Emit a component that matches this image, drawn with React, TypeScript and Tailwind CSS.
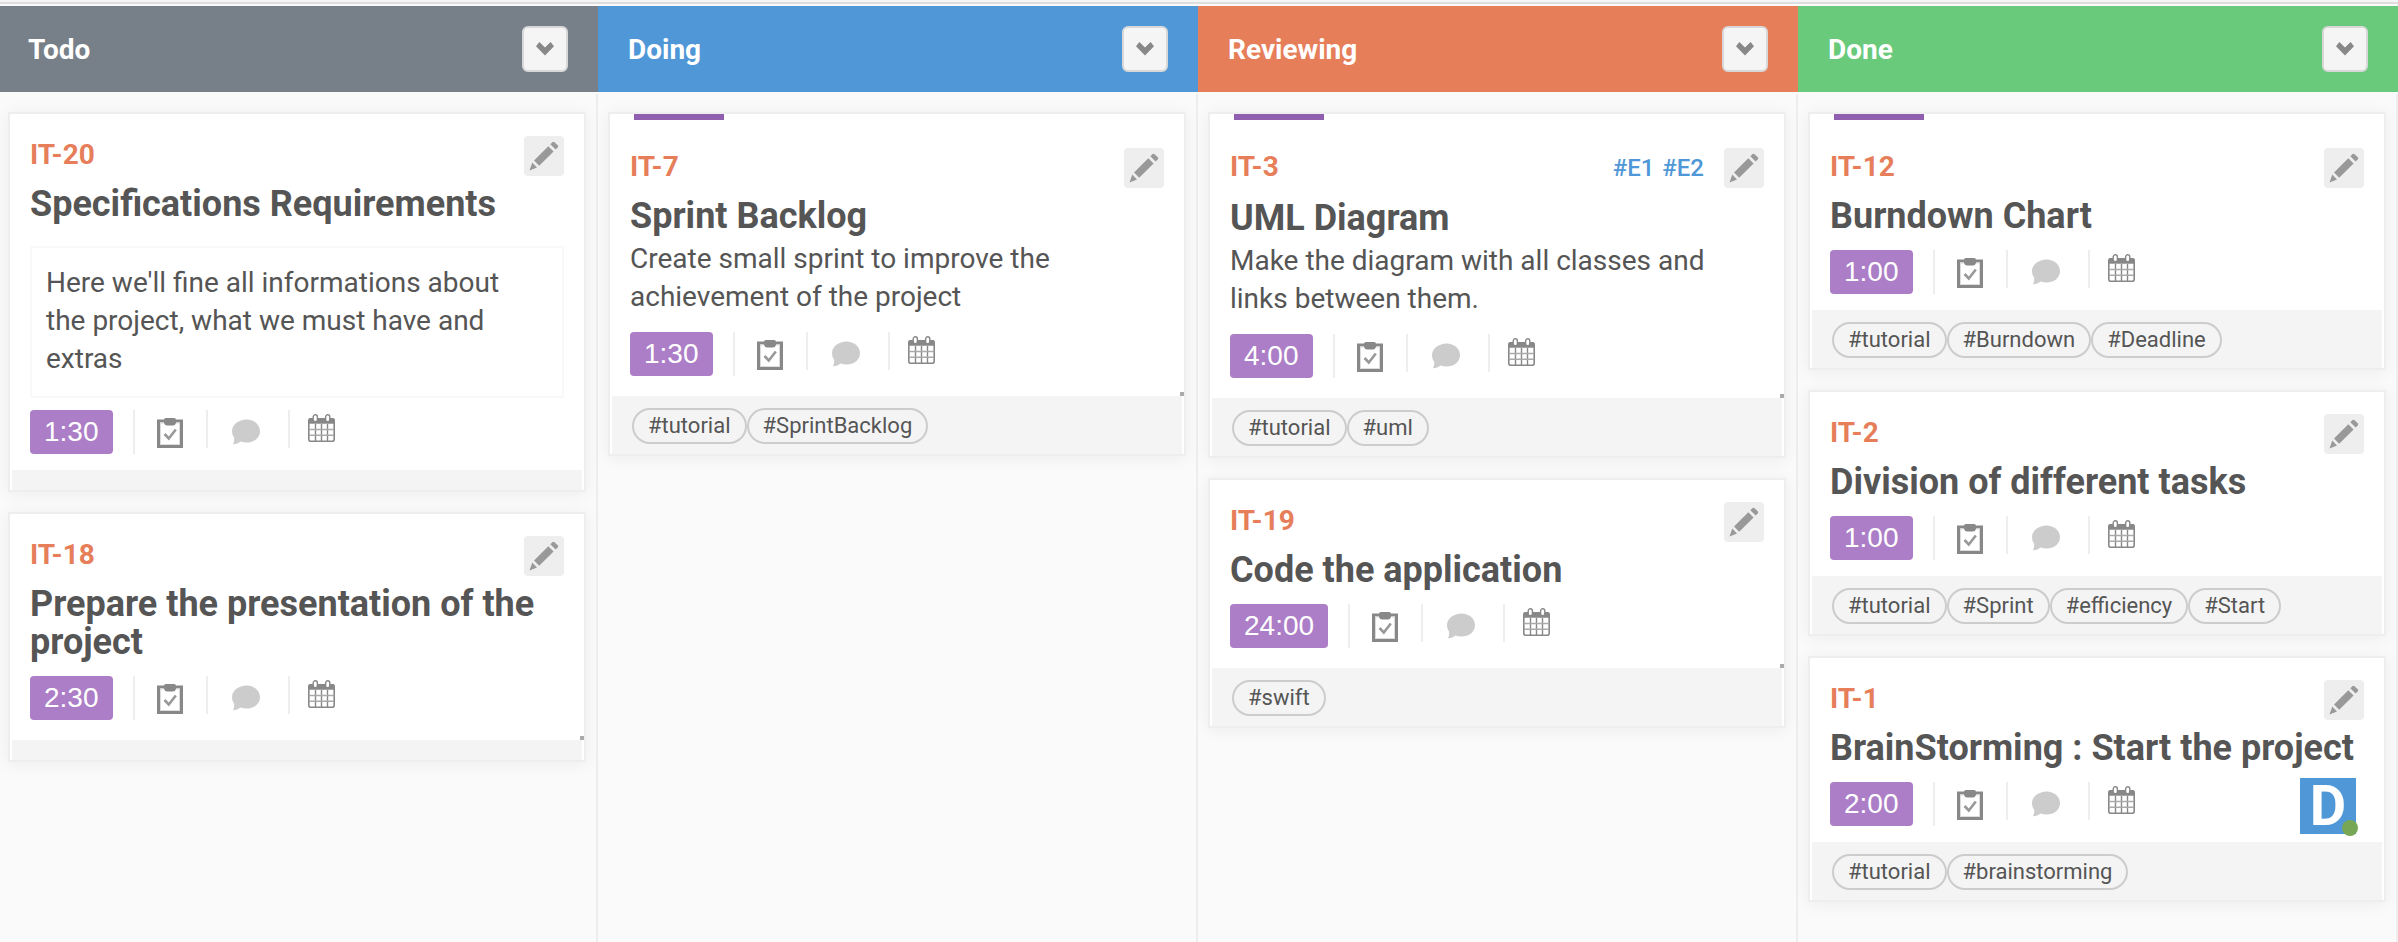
import React from "react";

type Task = {
  id: string;
  title: string;
  time: string;
  text?: string;
  boxed?: boolean;
  accent?: boolean;
  handle?: boolean;
  epics?: string[];
  tags?: string[];
  member?: string;
};

type Column = { name: string; color: string; tasks: Task[] };

const columns: Column[] = [
  {
    name: "Todo",
    color: "bg-[#777f88]",
    tasks: [
      {
        id: "IT-20",
        title: "Specifications Requirements",
        text: "Here we'll fine all informations about the project, what we must have and extras",
        boxed: true,
        time: "1:30",
      },
      { id: "IT-18", title: "Prepare the presentation of the project", time: "2:30", handle: true },
    ],
  },
  {
    name: "Doing",
    color: "bg-[#4f97d7]",
    tasks: [
      {
        id: "IT-7",
        title: "Sprint Backlog",
        text: "Create small sprint to improve the achievement of the project",
        time: "1:30",
        accent: true,
        handle: true,
        tags: ["#tutorial", "#SprintBacklog"],
      },
    ],
  },
  {
    name: "Reviewing",
    color: "bg-[#e67e5a]",
    tasks: [
      {
        id: "IT-3",
        title: "UML Diagram",
        text: "Make the diagram with all classes and links between them.",
        time: "4:00",
        accent: true,
        handle: true,
        epics: ["#E1", "#E2"],
        tags: ["#tutorial", "#uml"],
      },
      { id: "IT-19", title: "Code the application", time: "24:00", handle: true, tags: ["#swift"] },
    ],
  },
  {
    name: "Done",
    color: "bg-[#69ca7c]",
    tasks: [
      { id: "IT-12", title: "Burndown Chart", time: "1:00", accent: true, tags: ["#tutorial", "#Burndown", "#Deadline"] },
      { id: "IT-2", title: "Division of different tasks", time: "1:00", tags: ["#tutorial", "#Sprint", "#efficiency", "#Start"] },
      { id: "IT-1", title: "BrainStorming : Start the project", time: "2:00", member: "D", tags: ["#tutorial", "#brainstorming"] },
    ],
  },
];

function ChevronIcon() {
  return (
    <svg width="18" height="14" viewBox="0 0 18 14" aria-hidden="true">
      <path d="M3.4 0 9 5.6 14.6 0 18 4.2 9 13.4 0 4.2Z" fill="#888" />
    </svg>
  );
}

function PencilIcon() {
  return (
    <svg width="40" height="40" viewBox="0 0 40 40" aria-hidden="true" fill="#999">
      <path d="M5.5 34.5 8.3 26.6 13 31.6Z" />
      <path d="M10 24.6 24.3 10.2 29.6 15.4 15.2 29.8Z" />
      <path d="M26.3 8.2 28.3 6.2Q29.4 5.2 30.6 6.2L33.7 9.3Q34.7 10.4 33.7 11.5L31.6 13.5Z" />
    </svg>
  );
}

function ClipboardIcon() {
  return (
    <svg width="26" height="30" viewBox="0 0 26 30" aria-hidden="true">
      <rect x="1.5" y="3" width="23" height="25.5" fill="#fff" stroke="#888" strokeWidth="3" />
      <rect x="3.5" y="5" width="19" height="21.5" fill="none" stroke="#ddd" strokeWidth="1" />
      <path d="M7 2Q7 0 9 0H17Q19 0 19 2V5Q18 7.5 16 7.5H10Q8 7.5 7 5Z" fill="#888" />
      <path d="M7.5 16 11.8 20.5 18.8 11.5" fill="none" stroke="#999" strokeWidth="2.6" />
    </svg>
  );
}

function CommentIcon() {
  return (
    <svg width="28" height="26" viewBox="0 0 28 26" aria-hidden="true">
      <path
        d="M14.500 0.500C22 0.500 28 5.500 28 12.200S22 23.500 14.500 23.500C12.300 23.500 10.300 23.100 8.500 22.400 6.500 24 4 25 1 25.300 1.900 23.500 2.400 21.500 2.200 18.800 0.800 16.900 0 14.600 0 12.200 0 5.500 7 0.500 14.500 0.500Z"
        fill="#ccc"
      />
    </svg>
  );
}

function CalendarIcon() {
  return (
    <svg width="27" height="28" viewBox="0 0 27 28" aria-hidden="true">
      <rect x="0.8" y="4.8" width="25.4" height="22.4" rx="2" fill="#fff" stroke="#888" strokeWidth="1.6" />
      <path d="M0.5 9.8V6Q0.5 4 2.5 4H24.5Q26.5 4 26.5 6V9.8Z" fill="#888" />
      <path d="M7.5 10V27M13.500 10V27M19.500 10V27" stroke="#888" strokeWidth="1.4" />
      <path d="M1 15.5H26M1 21.200H26" stroke="#aaa" strokeWidth="1.6" />
      <rect x="5.2" y="0.8" width="4.2" height="7" rx="2.1" fill="#fff" stroke="#888" strokeWidth="1.4" />
      <rect x="17.6" y="0.8" width="4.2" height="7" rx="2.1" fill="#fff" stroke="#888" strokeWidth="1.4" />
    </svg>
  );
}

function Card({ task }: { task: Task }) {
  return (
    <article className="border-2 border-[#eee] bg-white shadow-[0_2px_16px_rgba(0,0,0,0.06)]">
      <div className={`relative px-5 ${task.handle ? "pb-5" : "pb-4"}`}>
        {task.accent && (
          <div className="h-3 px-1">
            <div className="h-1.5 w-[90px] bg-[#915fb0]" />
          </div>
        )}
        <div className={`flex items-start pt-[22px] ${task.epics ? "h-[73px]" : "h-[71px]"}`}>
          <a href="#" className="text-[28px] leading-[38px] font-bold text-[#e67e5a]">
            {task.id}
          </a>
          {task.epics && (
            <div className="ml-auto flex gap-2 pr-5 text-2xl leading-10 font-medium text-[#4f97d7]">
              {task.epics.map((e) => (
                <a href="#" key={e}>
                  {e}
                </a>
              ))}
            </div>
          )}
          <button type="button" aria-label="Edit" className={`rounded bg-[#eee] ${task.epics ? "" : "ml-auto"}`}>
            <PencilIcon />
          </button>
        </div>
        <h3 className="text-4xl leading-[38px] font-bold">{task.title}</h3>
        {task.text &&
          (task.boxed ? (
            <p className="mt-[23px] mb-3 border-2 border-[#f9f9f9] pt-4 pr-5 pb-[18px] pl-3.5 text-[28px] leading-[38px]">{task.text}</p>
          ) : (
            <p className="mt-[5px] mb-4 text-[28px] leading-[38px]">{task.text}</p>
          ))}
        <div className={`flex h-11 items-start ${task.text ? "" : "mt-[15px]"}`}>
          <span className="mr-5 rounded bg-[#ac7ec7] px-3.5 font-['Liberation_Sans',sans-serif] text-[28px] leading-[44px] text-white">
            {task.time}
          </span>
          <button type="button" aria-label="Checklist" className="h-11 border-l-2 border-[#eee] pt-2 pr-[23px] pb-1.5 pl-[22px]">
            <ClipboardIcon />
          </button>
          <button type="button" aria-label="Comments" className="h-[38px] border-l-2 border-[#eee] pt-1.5 pr-7 pl-6">
            <CommentIcon />
          </button>
          <button type="button" aria-label="Due date" className="h-[38px] border-l-2 border-[#eee] pb-0.5 pl-[18px]">
            <CalendarIcon />
          </button>
          {task.member && (
            <a
              href="#"
              className="relative -mt-1 mr-2 ml-auto flex size-14 items-center justify-center bg-[#4f97d7] text-[56px] leading-[56px] font-bold text-white"
            >
              {task.member}
              <span className="absolute -right-0.5 -bottom-0.5 size-4 rounded-full bg-[#77a754]" />
            </a>
          )}
        </div>
        {task.handle && <span className="absolute right-0 bottom-0 size-1 bg-[#aaa]" />}
      </div>
      <footer className="mx-0.5 flex min-h-5 bg-[#f4f4f4] px-5">
        {task.tags && (
          <ul className="flex flex-wrap pt-3 pb-2.5">
            {task.tags.map((t) => (
              <li key={t} className="rounded-full border-2 border-[#ccc] px-3.5 text-[22px] leading-8">
                {t}
              </li>
            ))}
          </ul>
        )}
      </footer>
    </article>
  );
}

export default function App() {
  return (
    <div className="flex min-h-screen flex-col overflow-hidden bg-[#fafafa] font-['Roboto',sans-serif] text-[#555]">
      <div className="h-1 border-b-2 border-[#ddd] bg-[#f5f5f5]" />
      <main className="-ml-0.5 grid grow grid-cols-4 pt-0.5">
        {columns.map((c) => (
          <section key={c.name} className="flex flex-col">
            <header className={`flex h-[86px] items-center justify-between px-[30px] ${c.color}`}>
              <h2 className="pt-0.5 text-[28px] leading-[38px] font-bold text-white">{c.name}</h2>
              <button
                type="button"
                aria-label={`${c.name} menu`}
                className="flex size-[46px] items-center justify-center rounded-md border-2 border-[#d8d8d8] bg-[#f5f5f5]"
              >
                <ChevronIcon />
              </button>
            </header>
            <div className="mt-0.5 flex grow flex-col gap-5 border-r-2 border-[#eee] px-2.5 pt-[18px]">
              {c.tasks.map((t) => (
                <Card key={t.id} task={t} />
              ))}
            </div>
          </section>
        ))}
      </main>
    </div>
  );
}
